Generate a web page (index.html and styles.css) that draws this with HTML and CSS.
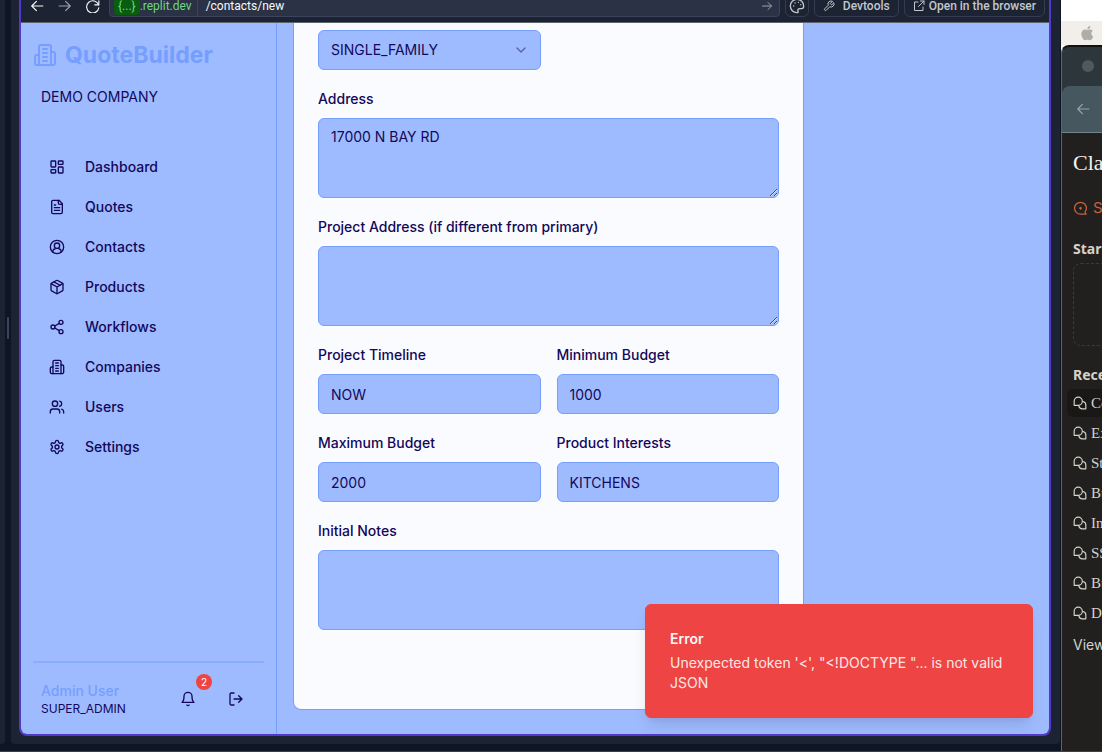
FILE: index.html
```html
<!DOCTYPE html>
<html lang="en">
<head>
<meta charset="utf-8">
<title>QuoteBuilder – New contact</title>
<link rel="stylesheet" href="styles.css">
</head>
<body>
<svg class="sprite" aria-hidden="true">
  <symbol id="building" viewBox="0 0 24 24"><path d="M6 22V4a2 2 0 0 1 2-2h8a2 2 0 0 1 2 2v18Z"/><path d="M6 12H4a2 2 0 0 0-2 2v6a2 2 0 0 0 2 2h2"/><path d="M18 9h2a2 2 0 0 1 2 2v9a2 2 0 0 1-2 2h-2"/><path d="M10 6h4M10 10h4M10 14h4M10 18h4"/></symbol>
  <symbol id="chats" viewBox="0 0 24 24"><path d="M2 15V9a7 7 0 1 1 7 7H2Z"/><path d="M17 9.500a6 6 0 0 1 5 6V22h-6a6 6 0 0 1-6-5"/></symbol>
</svg>
<div class="workspace">
  <div class="pane-edge"></div>
  <div class="splitter"><span class="handle"></span></div>
  <div class="pane">
    <div class="preview">
      <header class="toolbar">
        <button class="tool-btn" aria-label="Back"><svg viewBox="0 0 24 24"><path d="M22 12H3M11 4l-8 8 8 8"/></svg></button>
        <button class="tool-btn dim" aria-label="Forward"><svg viewBox="0 0 24 24"><path d="M2 12h19M13 4l8 8-8 8"/></svg></button>
        <button class="tool-btn" aria-label="Reload"><svg viewBox="0 0 24 24"><path d="M22 3v7h-7"/><path d="M21.500 10A10.500 10.500 0 1 0 22 15"/></svg></button>
        <div class="url">
          <span class="host"><span class="sub">{...}</span>.replit.dev</span>
          <span class="path">/contacts/new</span>
          <svg class="go" viewBox="0 0 24 24"><path d="M3 12h18M14 5l7 7-7 7"/></svg>
        </div>
        <button class="chip square" aria-label="Theme"><svg class="i16" viewBox="0 0 24 24"><path d="M12 2a10 10 0 1 0 0 20c1.700 0 2-1.200 1.500-2.500-.8-2.200.3-3.500 2.500-3.500h3c2 0 3-1.500 3-4A10 10 0 0 0 12 2Z"/><path d="M7 12h.1M9 7.500h.1M14 6.500h.1M17.500 10h.1"/></svg></button>
        <button class="chip"><svg class="i12" viewBox="0 0 24 24"><path d="M14.700 6.300a1 1 0 0 0 0 1.400l1.600 1.600a1 1 0 0 0 1.400 0l3.800-3.800a6 6 0 0 1-8 8l-7 7a2.100 2.100 0 0 1-3-3l7-7a6 6 0 0 1 8-8Z"/></svg>Devtools</button>
        <button class="chip tight"><svg class="i12" viewBox="0 0 24 24"><path d="M15 2h7v7M22 2 11 13M10 4H3v17h17v-7"/></svg>Open in the browser</button>
      </header>
      <div class="app">
        <aside class="sidebar">
          <div class="brand"><svg viewBox="0 0 24 24"><use href="#building"/></svg>QuoteBuilder</div>
          <p class="company">DEMO COMPANY</p>
          <nav class="nav">
            <a href="#dashboard"><svg viewBox="0 0 24 24"><rect x="3" y="3" width="7" height="9" rx="1"/><rect x="14" y="3" width="7" height="5" rx="1"/><rect x="14" y="12" width="7" height="9" rx="1"/><rect x="3" y="16" width="7" height="5" rx="1"/></svg>Dashboard</a>
            <a href="#quotes"><svg viewBox="0 0 24 24"><path d="M15 2H6a2 2 0 0 0-2 2v16a2 2 0 0 0 2 2h12a2 2 0 0 0 2-2V7Z"/><path d="M14 2v4a2 2 0 0 0 2 2h4M10 9H8M16 13H8M16 17H8"/></svg>Quotes</a>
            <a href="#contacts"><svg viewBox="0 0 24 24"><circle cx="12" cy="12" r="10"/><circle cx="12" cy="10" r="4"/><path d="M6 20v-1a3 3 0 0 1 3-4M18 20v-1a3 3 0 0 0-3-4"/></svg>Contacts</a>
            <a href="#products"><svg viewBox="0 0 24 24"><path d="m7.500 4.300 9 5.100"/><path d="M21 8a2 2 0 0 0-1-1.700l-7-4a2 2 0 0 0-2 0l-7 4A2 2 0 0 0 3 8v8a2 2 0 0 0 1 1.700l7 4a2 2 0 0 0 2 0l7-4a2 2 0 0 0 1-1.700Z"/><path d="m3.300 7 8.700 5 8.700-5M12 22V12"/></svg>Products</a>
            <a href="#workflows"><svg viewBox="0 0 24 24"><circle cx="18" cy="5" r="3"/><circle cx="6" cy="12" r="3"/><circle cx="18" cy="19" r="3"/><path d="m8.600 13.500 6.800 4M15.400 6.500l-6.800 4"/></svg>Workflows</a>
            <a href="#companies"><svg viewBox="0 0 24 24"><use href="#building"/></svg>Companies</a>
            <a href="#users"><svg viewBox="0 0 24 24"><path d="M16 21v-2a4 4 0 0 0-4-4H6a4 4 0 0 0-4 4v2"/><circle cx="9" cy="7" r="4"/><path d="M22 21v-2a4 4 0 0 0-3-3.900M16 3.100a4 4 0 0 1 0 7.800"/></svg>Users</a>
            <a href="#settings"><svg viewBox="0 0 24 24"><path d="M12.220 2h-.44a2 2 0 0 0-2 2v.18a2 2 0 0 1-1 1.730l-.43.25a2 2 0 0 1-2 0l-.15-.08a2 2 0 0 0-2.730.730l-.22.380a2 2 0 0 0 .73 2.730l.15.1a2 2 0 0 1 1 1.720v.51a2 2 0 0 1-1 1.740l-.15.09a2 2 0 0 0-.73 2.730l.22.380a2 2 0 0 0 2.730.730l.15-.08a2 2 0 0 1 2 0l.43.25a2 2 0 0 1 1 1.730V20a2 2 0 0 0 2 2h.44a2 2 0 0 0 2-2v-.18a2 2 0 0 1 1-1.730l.43-.25a2 2 0 0 1 2 0l.15.080a2 2 0 0 0 2.730-.730l.22-.39a2 2 0 0 0-.73-2.730l-.15-.08a2 2 0 0 1-1-1.740v-.5a2 2 0 0 1 1-1.740l.15-.09a2 2 0 0 0 .73-2.730l-.22-.38a2 2 0 0 0-2.730-.730l-.15.080a2 2 0 0 1-2 0l-.43-.25a2 2 0 0 1-1-1.730V4a2 2 0 0 0-2-2z"/><circle cx="12" cy="12" r="3"/></svg>Settings</a>
          </nav>
          <footer class="account">
            <div class="who"><span class="name">Admin User</span><span class="role">SUPER_ADMIN</span></div>
            <button class="icon-btn" aria-label="Notifications"><svg viewBox="0 0 24 24"><path d="M6 8a6 6 0 0 1 12 0c0 7 3 9 3 9H3s3-2 3-9M10.300 21a1.940 1.940 0 0 0 3.400 0"/></svg><span class="badge">2</span></button>
            <button class="icon-btn" aria-label="Log out"><svg viewBox="0 0 24 24"><path d="M9 21H5a2 2 0 0 1-2-2V5a2 2 0 0 1 2-2h4M16 17l5-5-5-5M21 12H9"/></svg></button>
          </footer>
        </aside>
        <main class="main">
          <form class="card">
            <div class="select-wrap">
              <select class="control" aria-label="Property type"><option>SINGLE_FAMILY</option></select>
              <svg class="chevron" viewBox="0 0 24 24"><path d="m6 9 6 6 6-6"/></svg>
            </div>
            <div class="field wide"><label for="address">Address</label><textarea class="control" id="address">17000 N BAY RD</textarea></div>
            <div class="field wide"><label for="project">Project Address (if different from primary)</label><textarea class="control" id="project"></textarea></div>
            <div class="field"><label for="timeline">Project Timeline</label><input class="control" id="timeline" value="NOW"></div>
            <div class="field"><label for="min">Minimum Budget</label><input class="control" id="min" value="1000"></div>
            <div class="field"><label for="max">Maximum Budget</label><input class="control" id="max" value="2000"></div>
            <div class="field"><label for="interests">Product Interests</label><input class="control" id="interests" value="KITCHENS"></div>
            <div class="field wide"><label for="notes">Initial Notes</label><textarea class="control" id="notes"></textarea></div>
          </form>
        </main>
        <div class="toast" role="alert"><strong>Error</strong><p>Unexpected token '&lt;', "&lt;!DOCTYPE "... is not valid JSON</p></div>
      </div>
    </div>
  </div>
  <section class="desktop">
    <div class="menubar"><svg viewBox="0 0 24 24"><path d="M17 12.500c0-2.500 2-3.600 2.200-3.800-1.300-1.800-3.200-2-3.900-2-1.600-.2-3.200 1-4 1s-2.100-1-3.500-1C4.200 6.800 2 9.600 2 13.200 2 17.500 5 23 7.700 23c1.300 0 1.900-.9 3.600-.9s2.200.9 3.600.9c2.300 0 4.300-3.800 4.900-5.700-.2 0-2.800-1.200-2.800-4.800ZM14.400 5c.8-1 1.300-2.300 1.200-3.700-1.200.1-2.600.8-3.400 1.700-.7.900-1.400 2.200-1.200 3.600 1.300.1 2.600-.7 3.400-1.600Z"/></svg></div>
    <div class="window">
      <div class="titlebar"><span class="dot"></span></div>
      <div class="tabs"><button class="tab-back" aria-label="Back"><svg viewBox="0 0 24 24"><path d="M22 12H3M11 4l-8 8 8 8"/></svg></button></div>
      <div class="chatbar">
        <h1>Cla</h1>
        <a class="start" href="#new"><svg viewBox="0 0 24 24"><path d="M21 21h-9a9.500 9.500 0 1 1 9.500-9.500c0 3-1 4.500-2.500 6.500l2 3Z"/><path d="M12 10v3M10.500 11.500h3"/></svg>S</a>
        <h2>Star</h2>
        <div class="dropzone"></div>
        <h2>Rece</h2>
        <nav class="chats">
          <a class="current" href="#c1"><svg viewBox="0 0 24 24"><use href="#chats"/></svg>Co</a>
          <a href="#c2"><svg viewBox="0 0 24 24"><use href="#chats"/></svg>Ex</a>
          <a href="#c3"><svg viewBox="0 0 24 24"><use href="#chats"/></svg>St</a>
          <a href="#c4"><svg viewBox="0 0 24 24"><use href="#chats"/></svg>Bu</a>
          <a href="#c5"><svg viewBox="0 0 24 24"><use href="#chats"/></svg>In</a>
          <a href="#c6"><svg viewBox="0 0 24 24"><use href="#chats"/></svg>SS</a>
          <a href="#c7"><svg viewBox="0 0 24 24"><use href="#chats"/></svg>Bu</a>
          <a href="#c8"><svg viewBox="0 0 24 24"><use href="#chats"/></svg>D</a>
        </nav>
        <a class="view" href="#all">View</a>
      </div>
    </div>
  </section>
</div>
</body>
</html>
```

FILE: styles.css
```css
:root {
  --ink: #13085a;
  --blue: #9fbbff;
  --line: #759eff;
  --paper: #fafbff;
  --pane: #1c2333;
  --night: #0e1525;
  --purple: #5239cc;
}

* { box-sizing: border-box; }

body {
  margin: 0;
  background: var(--night);
  font: 14px/20px Inter, "Liberation Sans", sans-serif;
  overflow: hidden;
}

h1, h2, p { margin: 0; }
a { color: inherit; text-decoration: none; }
button { font: inherit; color: inherit; border: 0; padding: 0; background: none; }

svg {
  flex: none;
  fill: none;
  stroke: currentColor;
  stroke-width: 2;
  stroke-linecap: round;
  stroke-linejoin: round;
}

.sprite { display: none; }

.workspace { display: flex; height: 100vh; border-bottom: 1px solid #3a404d; }

.pane-edge {
  width: 5px;
  margin-bottom: 7px;
  background: var(--pane);
  border-bottom-right-radius: 4px;
}

.splitter { width: 6px; display: flex; align-items: center; justify-content: center; padding-bottom: 95px; }
.handle { width: 2px; height: 22px; border-radius: 1px; background: #3c445c; }

.pane {
  flex: 1;
  min-width: 0;
  display: flex;
  margin-bottom: 7px;
  padding: 0 9px 8px 8px;
  background: var(--pane);
  border-radius: 0 0 4px 4px;
}

.preview {
  flex: 1;
  min-width: 0;
  display: flex;
  flex-direction: column;
  border: solid var(--purple);
  border-width: 0 2px 2px;
  border-radius: 0 0 8px 8px;
  overflow: hidden;
}

/* Browser toolbar */
.toolbar {
  height: 23px;
  flex: none;
  display: flex;
  align-items: flex-end;
  gap: 5px;
  padding: 0 4px 5px;
  border-bottom: 1px solid #5d6470;
  background: var(--pane);
  color: #f5f9fc;
  font-family: Roboto, sans-serif;
  font-size: 12px;
  overflow: hidden;
}

.tool-btn { width: 23px; height: 22px; display: grid; place-items: center; }
.tool-btn svg { width: 14px; height: 14px; }
.tool-btn.dim { color: #9da2a6; }

.url {
  flex: 1;
  min-width: 0;
  height: 22px;
  display: flex;
  align-items: center;
  padding: 0 6px 0 4px;
  border: 1px solid #3c445c;
  border-radius: 4px;
  background: #2b3245;
}

.host { color: #6cd97e; padding-right: 5px; border-right: 1px solid #3c445c; }
.sub { background: #0a5c10; border-radius: 4px; padding: 2px 4px; }
.path { flex: 1; padding-left: 8px; }
.go { width: 12px; height: 12px; color: #9da2a6; }

.chip {
  height: 22px;
  display: flex;
  align-items: center;
  gap: 8px;
  padding: 0 8px;
  border: 1px solid #353d52;
  border-radius: 6px;
  color: #c2c8cc;
  font-weight: 500;
  white-space: nowrap;
}
.chip.tight { gap: 4px; }
.chip.square { width: 24px; padding: 0; justify-content: center; }
.i16 { width: 16px; height: 16px; }
.i12 { width: 12px; height: 12px; }

/* Application */
.app {
  position: relative;
  flex: 1;
  min-height: 0;
  display: flex;
  background: var(--blue);
  color: var(--ink);
}

.sidebar {
  width: 256px;
  flex: none;
  display: flex;
  flex-direction: column;
  padding: 16px 12px;
  border-right: 1px solid var(--line);
}

.brand {
  display: flex;
  align-items: center;
  gap: 8px;
  color: var(--line);
  font-size: 23px;
  line-height: 32px;
  font-weight: 700;
}
.brand svg { width: 24px; height: 24px; }

.company { padding: 16px 8px; }

.nav { display: flex; flex-direction: column; padding-top: 24px; font-weight: 500; }
.nav a { height: 40px; display: flex; align-items: center; gap: 20px; padding-left: 16px; }
.nav svg, .icon-btn svg { width: 16px; height: 16px; }

.account {
  margin-top: auto;
  display: flex;
  align-items: center;
  padding: 18px 8px 1px;
  border-top: 2px solid #8aadff;
}
.who { flex: 1; display: flex; flex-direction: column; }
.name { color: var(--line); font-weight: 500; }
.role { font-size: 12px; line-height: 16px; }
.icon-btn { position: relative; width: 40px; height: 36px; display: grid; place-items: center; }
.icon-btn + .icon-btn { margin-left: 8px; }

.badge {
  position: absolute;
  top: -7px;
  right: -4px;
  width: 16px;
  height: 16px;
  border-radius: 50%;
  background: #ef4444;
  color: #fff;
  font-size: 10px;
  line-height: 16px;
  text-align: center;
}

.main { flex: 1; min-width: 0; padding: 0 16px 24px; }

.card {
  max-width: 511px;
  height: 100%;
  display: grid;
  grid-template-columns: 1fr 1fr;
  align-content: start;
  gap: 17px 16px;
  padding: 7px 24px 80px;
  background: var(--paper);
  border: 1px solid var(--line);
  border-top: 0;
  border-radius: 0 0 8px 8px;
}

.field { display: flex; flex-direction: column; gap: 7px; min-width: 0; }
.wide, .select-wrap { grid-column: 1 / -1; }
.field label { font-weight: 500; line-height: 24px; }

.control {
  width: 100%;
  height: 40px;
  padding: 8px 12px;
  border: 1px solid var(--line);
  border-radius: 6px;
  background: var(--blue);
  color: var(--ink);
  font: inherit;
}
textarea.control { display: block; height: 80px; resize: vertical; }
select.control { appearance: none; }

.select-wrap { position: relative; width: calc(50% - 8px); }
.chevron { position: absolute; right: 12px; top: 12px; width: 16px; height: 16px; opacity: .5; pointer-events: none; }

.toast {
  position: absolute;
  right: 16px;
  bottom: 16px;
  width: 388px;
  padding: 24px;
  border: 1px solid #ef4444;
  border-radius: 6px;
  background: #ef4444;
  color: #fafafa;
  box-shadow: 0 10px 15px -3px rgba(0, 0, 0, .1), 0 4px 6px -4px rgba(0, 0, 0, .1);
}
.toast strong { display: block; font-weight: 600; margin-bottom: 4px; }
.toast p { opacity: .9; }

/* Neighbouring desktop window */
.desktop {
  width: 41px;
  flex: none;
  margin-left: 1px;
  display: flex;
  flex-direction: column;
  overflow: hidden;
  white-space: nowrap;
  background: #fff;
  color: #d5d2c8;
}

.menubar { margin-top: 21px; height: 24px; flex: none; padding: 4px 19px; background: #f2efea; }
.menubar svg { width: 16px; height: 16px; fill: #aeaea9; stroke: none; }

.window {
  flex: 1;
  width: 400px;
  border: 1px solid #5d6366;
  border-top: 2px solid #111;
  border-radius: 8px 0 0 0;
  background: #2d363b;
}
.titlebar { height: 39px; padding: 13px 20px; }
.dot { display: block; width: 12px; height: 12px; border-radius: 50%; background: #50595e; }
.tabs { height: 47px; padding: 16px 14px; background: #465760; border-bottom: 1px solid #72858d; border-radius: 8px 0 0 0; }
.tab-back { display: block; color: #9ba4a8; }
.tab-back svg { display: block; width: 14px; height: 14px; }

.chatbar { height: 100%; padding: 12px 11px; background: #21201e; }
.chatbar h1 { color: #f5f4ef; font: 500 22px/36px "Liberation Serif", serif; }
.start { display: flex; align-items: center; gap: 5px; height: 54px; color: #c6613f; font-size: 15px; }
.start svg { width: 15px; height: 15px; }
.chatbar h2 { font: 700 14px/28px "Noto Sans", sans-serif; }
.dropzone { height: 83px; margin-bottom: 15px; border: 1px dashed #3c3b38; border-radius: 8px; }
.chats { display: flex; flex-direction: column; gap: 2px; margin: 0 -6px; font: 15px/28px "Liberation Serif", serif; }
.chats a { display: flex; align-items: center; gap: 4px; height: 28px; padding-left: 6px; border-radius: 6px; }
.chats svg { width: 14px; height: 14px; }
.chats .current { background: #191817; }
.view { display: block; line-height: 36px; }
```
